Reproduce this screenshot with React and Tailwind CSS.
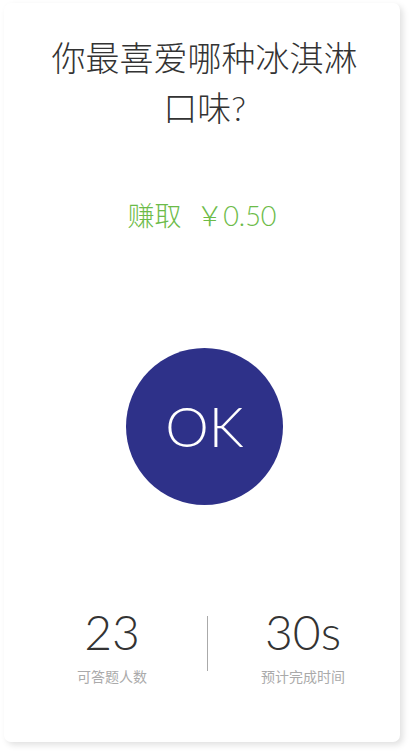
export default function App() {
  const font = { fontFamily: 'Lato, "Noto Sans CJK SC", sans-serif' };
  return (
    <div className="w-[411px] h-[754px] bg-white overflow-hidden" style={font}>
      <div className="ml-[4px] mt-[3px] w-[396px] h-[739px] bg-white rounded-[7px] shadow-[3px_3px_6px_rgba(0,0,0,0.12)] flex flex-col items-center">
        <h1 className="mt-[30px] ml-[5px] px-[36px] text-center text-[34px] leading-[50px] font-light text-[#333]">
          你最喜爱哪种冰淇淋口味?
        </h1>
        <p className="mt-[66px] text-[27px] leading-[34px] font-light text-[#6cbb48]">
          赚取&nbsp;&nbsp;￥0.50
        </p>
        <button className="mt-[115px] ml-[5px] w-[157px] h-[157px] rounded-full bg-[#2e3189] flex items-center justify-center text-white text-[55px] font-light">
          OK
        </button>
        <div className="mt-[103px] self-start ml-[13px] flex items-start">
          <div className="w-[190px] flex flex-col items-center">
            <span className="text-[48px] leading-[48px] font-light text-[#333]">23</span>
            <span className="mt-[12px] text-[14px] leading-[18px] text-[#aaa]">可答题人数</span>
          </div>
          <div className="mt-[8px] w-px h-[55px] bg-[#aaa]" />
          <div className="w-[190px] flex flex-col items-center">
            <span className="text-[48px] leading-[48px] font-light text-[#333]">30s</span>
            <span className="mt-[12px] text-[14px] leading-[18px] text-[#aaa]">预计完成时间</span>
          </div>
        </div>
      </div>
    </div>
  );
}
